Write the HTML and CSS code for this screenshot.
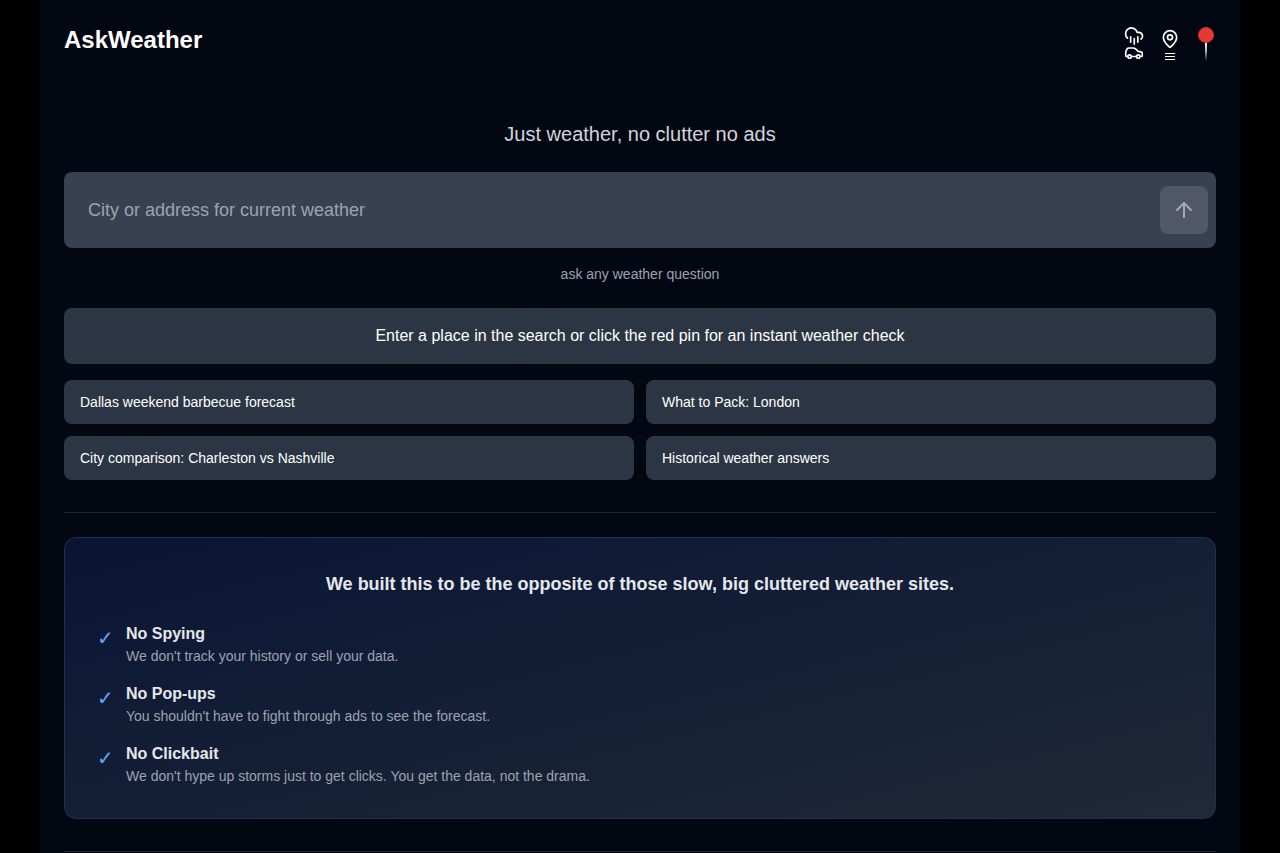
FILE: index.html
```html
<!DOCTYPE html>
<html lang="en">
<head>
<meta charset="utf-8">
<meta name="viewport" content="width=device-width, initial-scale=1">
<title>AskWeather</title>
<link rel="stylesheet" href="styles.css">
</head>
<body>
<div class="shell">
  <header class="header">
    <h1 class="brand">AskWeather</h1>
    <nav class="actions">
      <button class="action" type="button" aria-label="Road trip weather">
        <svg class="icon" width="20" height="20" viewBox="0 0 24 24"><path d="M4.200 14.500A7 7 0 1 1 15.710 7.600h1.790a4.500 4.500 0 0 1 3 8M8 13v6.500M12.300 15v6.500M16.600 13v6.500"/></svg>
        <svg class="icon" width="20" height="14" viewBox="0 0 24 17"><path d="M4.300 12.800H3.200C2.400 12.800 2 12.400 2 11.800V7.800C2 6.800 2.200 6 2.800 5L3.800 3.300C4.200 2.700 4.800 2.400 5.500 2.400H11c1 0 1.900.3 2.600.9L17 6.500l3.500.7c1 .2 1.500.8 1.500 1.700v2.900c0 .6-.4 1-1 1h-1.700M8.700 12.800h6.400"/><circle cx="6.600" cy="12.800" r="2.100"/><circle cx="17.200" cy="12.800" r="2.100"/></svg>
      </button>
      <button class="action action-places" type="button" aria-label="Saved places">
        <svg class="icon" width="20" height="20" viewBox="0 0 24 24"><path d="M20 10c0 4.993-5.539 10.193-7.399 11.799a1 1 0 0 1-1.202 0C9.539 20.193 4 14.993 4 10a8 8 0 0 1 16 0"/><circle cx="12" cy="10" r="3"/></svg>
        <span class="lines"><i></i><i></i><i></i></span>
      </button>
      <button class="action action-pin" type="button" aria-label="Use my location">
        <span class="pin-head"></span>
        <span class="pin-needle"></span>
      </button>
    </nav>
  </header>
  <main>
    <p class="tagline">Just weather, no clutter no ads</p>
    <form class="search">
      <input class="search-input" type="text" aria-label="City or address" placeholder="City or address for current weather">
      <button class="search-button" type="button" aria-label="Search">
        <svg class="icon" width="24" height="24" viewBox="0 0 24 24"><path d="M12 19V5M5 12l7-7 7 7"/></svg>
      </button>
    </form>
    <p class="hint">ask any weather question</p>
    <p class="notice">Enter a place in the search or click the red pin for an instant weather check</p>
    <div class="links">
      <a class="link" href="#">Dallas weekend barbecue forecast</a>
      <a class="link" href="#">What to Pack: London</a>
      <a class="link" href="#">City comparison: Charleston vs Nashville</a>
      <a class="link" href="#">Historical weather answers</a>
    </div>
    <section class="promise-section">
      <div class="promise">
        <h2 class="promise-title">We built this to be the opposite of those slow, big cluttered weather sites.</h2>
        <ul class="points">
          <li class="point"><span class="check">✓</span><div><h3 class="point-title">No Spying</h3><p class="point-text">We don't track your history or sell your data.</p></div></li>
          <li class="point"><span class="check">✓</span><div><h3 class="point-title">No Pop-ups</h3><p class="point-text">You shouldn't have to fight through ads to see the forecast.</p></div></li>
          <li class="point"><span class="check">✓</span><div><h3 class="point-title">No Clickbait</h3><p class="point-text">We don't hype up storms just to get clicks. You get the data, not the drama.</p></div></li>
        </ul>
      </div>
    </section>
  </main>
  <footer class="footer"></footer>
</div>
</body>
</html>
```

FILE: styles.css
```css
* { box-sizing: border-box; }
body, h1, h2, h3, p, ul { margin: 0; padding: 0; }
body {
  background: #000;
  color: #fff;
  font: 16px/24px "Liberation Sans", Arial, sans-serif;
}
button, input { font: inherit; border: 0; padding: 0; }
.shell {
  max-width: 1200px;
  min-height: 100vh;
  margin: 0 auto;
  padding: 24px 24px 0;
  background: #030712;
}
.header {
  display: flex;
  justify-content: space-between;
  align-items: flex-start;
}
.brand { font-size: 24px; line-height: 32px; font-weight: 700; }
.actions { display: flex; gap: 16px; }
.action {
  display: flex;
  flex-direction: column;
  align-items: center;
  width: 20px;
  height: 40px;
  padding-top: 2px;
  background: none;
  color: #fff;
  cursor: pointer;
}
.action-places { padding-top: 5px; }
.action-pin { padding-top: 3px; }
.icon {
  display: block;
  flex: none;
  fill: none;
  stroke: currentColor;
  stroke-width: 2;
  stroke-linecap: round;
  stroke-linejoin: round;
}
.lines { display: grid; gap: 2px; width: 10px; margin-top: 4px; }
.lines i { height: 1px; background: #fff; }
.pin-head {
  width: 16px;
  height: 16px;
  border: 1px solid #d3342f;
  border-radius: 50%;
  background: #e53935;
}
.pin-needle {
  width: 2px;
  height: 18px;
  background: linear-gradient(#fff, #9ca3af 50%, transparent);
}
.tagline {
  margin-top: 56px;
  text-align: center;
  font-size: 20px;
  line-height: 28px;
  color: #d1d5db;
}
.search {
  display: flex;
  align-items: center;
  margin-top: 24px;
  padding: 14px 8px 14px 24px;
  border-radius: 8px;
  background: #384151;
}
.search-input {
  flex: 1;
  min-width: 0;
  height: 48px;
  background: none;
  outline: none;
  color: #fff;
  font-size: 18px;
}
.search-input::placeholder { color: #9ca3af; opacity: 1; }
.search-button {
  display: grid;
  place-items: center;
  width: 48px;
  height: 48px;
  border-radius: 8px;
  background: #505766;
  color: #a4a9b3;
}
.hint {
  margin-top: 16px;
  text-align: center;
  font-size: 14px;
  line-height: 20px;
  color: #9ca3af;
}
.notice {
  margin-top: 24px;
  padding: 16px;
  border-radius: 8px;
  background: #2c3543;
  text-align: center;
}
.links {
  display: grid;
  grid-template-columns: 1fr 1fr;
  gap: 12px;
  margin-top: 16px;
}
.link {
  padding: 12px 16px;
  border-radius: 8px;
  background: #2c3543;
  color: #fff;
  font-size: 14px;
  line-height: 20px;
  text-decoration: none;
}
.promise-section {
  margin-top: 32px;
  padding: 24px 0 32px;
  border-top: 1px solid #1f2530;
}
.promise {
  padding: 32px;
  border: 1px solid #1f3052;
  border-radius: 12px;
  background: linear-gradient(to bottom right, #0a1535, #1f2937);
}
.promise-title {
  text-align: center;
  font-size: 18px;
  line-height: 28px;
  color: #e5e7eb;
}
.points { display: grid; gap: 16px; margin-top: 24px; list-style: none; }
.point { display: flex; gap: 12px; }
.check {
  width: 17px;
  margin-top: 2px;
  font-size: 20px;
  line-height: 28px;
  color: #60a5fa;
}
.point-title { font-size: 16px; line-height: 24px; color: #e5e7eb; }
.point-text { font-size: 14px; line-height: 20px; color: #9ca3af; }
.footer { border-top: 1px solid #1f2530; }
```
